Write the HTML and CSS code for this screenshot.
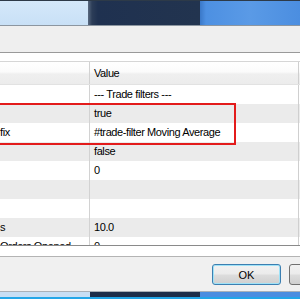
FILE: index.html
```html
<!DOCTYPE html>
<html>
<head>
  <meta charset="UTF-8">
  <title>Expert properties</title>
  <link rel="stylesheet" href="styles.css">
</head>
<body>
  <div class="screen">
    <div class="titlebar">
      <div class="tb-left"></div>
      <div class="tb-mid"></div>
      <div class="tb-right"></div>
    </div>
    <div class="toolbar"></div>
    <div class="gap"></div>

    <div class="grid">
      <div class="row head"><div class="c1"></div><div class="c2">Value</div></div>
      <div class="row"><div class="c1"></div><div class="c2">--- Trade filters ---</div></div>
      <div class="row alt"><div class="c1"></div><div class="c2">true</div></div>
      <div class="row"><div class="c1">fix</div><div class="c2">#trade-filter Moving Average</div></div>
      <div class="row alt"><div class="c1"></div><div class="c2">false</div></div>
      <div class="row"><div class="c1"></div><div class="c2">0</div></div>
      <div class="row alt"><div class="c1"></div><div class="c2"></div></div>
      <div class="row"><div class="c1"></div><div class="c2"></div></div>
      <div class="row alt"><div class="c1">s</div><div class="c2">10.0</div></div>
      <div class="row"><div class="c1">Orders Opened</div><div class="c2">0</div></div>
      <!-- highlight frame drawn over the two rows -->
      <div class="mark"></div>
    </div>
    <div class="gridfoot"></div>

    <div class="footer">
      <button class="btn ok">OK</button>
      <button class="btn">Cancel</button>
    </div>

    <div class="taskbar">
      <div class="tk-left"></div>
      <div class="tk-mid"></div>
      <div class="tk-right"></div>
    </div>
  </div>
</body>
</html>
```

FILE: styles.css
```css
body {
  margin: 0;
  padding: 0;
  font-family: "Liberation Sans", Arial, sans-serif;
  font-size: 11px;
  color: #000;
  background: #fff;
  overflow: hidden;
}
.screen {
  width: 300px;
  height: 300px;
  display: flex;
  flex-direction: column;
  overflow: hidden;
}
.titlebar {
  display: flex;
  height: 24px;
  border-top: 1px solid #2d3a48;
  flex-shrink: 0;
}
.tb-left {
  width: 88px;
  background: linear-gradient(180deg, #d4e8fa 0%, #c8e0f6 100%);
}
.tb-mid {
  width: 112px;
  background: linear-gradient(90deg, #5a6a80 0px, #2c3d58 4px, #1f3150 10px, #22344f 100%);
}
.tb-right {
  flex: 1;
  background: linear-gradient(90deg, #3a78c8 0px, #4d90e2 6px, #5a9ae6 50%, #4b8ee0 100%);
}
.toolbar {
  height: 26px;
  flex-shrink: 0;
  background: #efefef;
  border-top: 1px solid #8c96a0;
  border-bottom: 1px solid #9a9a9a;
}
.gap {
  height: 8px;
  flex-shrink: 0;
  background: #fff;
}
.grid {
  position: relative;
  box-sizing: border-box;
  height: 185px;
  flex-shrink: 0;
  overflow: hidden;
  border-top: 1px solid #d6d6d6;
  border-bottom: 1px solid #8a8a8a;
  letter-spacing: -0.4px;
}
.row {
  display: flex;
  height: 19px;
  line-height: 19px;
  background: #fff;
}
.row.alt {
  background: #ebebeb;
}
.row.head {
  height: 23px;
  line-height: 22px;
  background: linear-gradient(180deg, #ffffff 0%, #fbfbfb 45%, #efefef 55%, #ececec 100%);
  border-bottom: 1px solid #e2e2e2;
  box-sizing: border-box;
}
.c1 {
  width: 90px;
  box-sizing: border-box;
  border-right: 1px solid #d2d2d2;
  white-space: nowrap;
  overflow: hidden;
}
.c2 {
  flex: 1;
  padding-left: 4px;
  white-space: nowrap;
  border-right: 1px solid #cfcfcf;
  margin-right: 1px;
}
.mark {
  position: absolute;
  top: 41px;
  left: -10px;
  width: 246px;
  height: 42px;
  box-sizing: border-box;
  border: 2px solid #e31b1b;
}
.gridfoot {
  height: 10px;
  flex-shrink: 0;
  background: #fff;
  border-bottom: 1px solid #b4b4b4;
}
.footer {
  height: 34px;
  flex-shrink: 0;
  display: flex;
  gap: 8px;
  padding-left: 212px;
  padding-top: 7px;
  box-sizing: border-box;
  background: #f0f0f0;
  overflow: hidden;
}
.btn {
  flex-shrink: 0;
  width: 69px;
  height: 21px;
  padding: 0;
  font-family: "Liberation Sans", Arial, sans-serif;
  font-size: 11px;
  color: #000;
  border: 1px solid #707070;
  border-radius: 3px;
  background: linear-gradient(180deg, #f2f2f2 0%, #ebebeb 48%, #dddddd 52%, #cfcfcf 100%);
}
.btn.ok {
  border-color: #3c7fb1;
  box-shadow: inset 0 0 0 1px #9fe2f7;
}
.taskbar {
  display: flex;
  height: 5px;
  flex-shrink: 0;
  border-top: 1px solid #a8b0b8;
  border-bottom: 2px solid #22a6e8;
}
.tk-left {
  width: 90px;
  background: #c6def4;
}
.tk-mid {
  width: 110px;
  background: #1d2e4a;
}
.tk-right {
  flex: 1;
  background: #4a8de0;
}
```
